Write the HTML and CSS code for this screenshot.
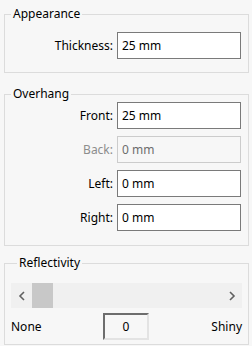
FILE: index.html
```html
<!DOCTYPE html>
<html lang="en">
<head>
    <meta charset="UTF-8">
    <title>Settings</title>
    <link rel="stylesheet" href="styles.css">
</head>
<body>
    <fieldset class="group group-appearance">
        <legend>Appearance</legend>
        <div class="field-row">
            <label for="thickness">Thickness:</label>
            <input id="thickness" type="text" value="25 mm">
        </div>
    </fieldset>

    <fieldset class="group group-overhang">
        <legend>Overhang</legend>
        <div class="field-row">
            <label for="front">Front:</label>
            <input id="front" type="text" value="25 mm">
        </div>
        <div class="field-row disabled">
            <label for="back">Back:</label>
            <input id="back" type="text" value="0 mm" disabled>
        </div>
        <div class="field-row">
            <label for="left">Left:</label>
            <input id="left" type="text" value="0 mm">
        </div>
        <div class="field-row">
            <label for="right">Right:</label>
            <input id="right" type="text" value="0 mm">
        </div>
    </fieldset>

    <fieldset class="group group-reflect">
        <legend>Reflectivity</legend>
        <div class="hscroll">
            <span class="arrow">
                <svg width="8" height="10" viewBox="0 0 8 10"><path d="M6 1 L2 5 L6 9" fill="none" stroke="#606060" stroke-width="1.6"/></svg>
            </span>
            <span class="track"><span class="thumb"></span></span>
            <span class="arrow">
                <svg width="8" height="10" viewBox="0 0 8 10"><path d="M2 1 L6 5 L2 9" fill="none" stroke="#606060" stroke-width="1.6"/></svg>
            </span>
        </div>
        <div class="range-row">
            <span class="range-min">None</span>
            <span class="value-box">0</span>
            <span class="range-max">Shiny</span>
        </div>
    </fieldset>
</body>
</html>
```

FILE: styles.css
```css
body {
    margin: 0;
    padding: 6px 0 0 0;
    background-color: #f7f7f7;
    color: #000;
    font-family: 'Noto Sans', 'Open Sans', sans-serif;
    font-size: 12px;
}

.group {
    margin: 0 3px 0 4px;
    padding: 0;
    border: 1px solid #dcdcdc;
    min-width: 0;
}

.group legend {
    margin-left: 6px;
    padding: 0 2px 0 2px;
    line-height: 16px;
}

.group-appearance {
    padding: 10px 7px 13px 0;
}

.group-overhang {
    margin-top: 13px;
    padding: 0 7px 14px 0;
    display: flex;
    flex-direction: column;
    gap: 7px;
}

.group-reflect {
    margin-top: 9px;
    padding: 12px 6px 4px 6px;
}

.field-row {
    display: grid;
    grid-template-columns: 1fr 124px;
    column-gap: 4px;
    align-items: center;
}

.field-row label {
    text-align: right;
}

.field-row input {
    box-sizing: border-box;
    width: 124px;
    height: 27px;
    margin: 0;
    padding: 0 4px;
    border: 1px solid #7a7a7a;
    background-color: #fff;
    color: #000;
    font-family: inherit;
    font-size: 12px;
    outline: none;
}

.field-row.disabled label {
    color: #8d8d8d;
}

.field-row.disabled input {
    border-color: #cccccc;
    background-color: #f7f7f7;
    color: #6d6d6d;
}

.hscroll {
    display: flex;
    height: 25px;
    background-color: #f0f0f0;
}

.hscroll .arrow {
    width: 21px;
    display: flex;
    align-items: center;
    justify-content: center;
}

.hscroll .track {
    flex: 1;
    display: flex;
}

.hscroll .thumb {
    width: 21px;
    background-color: #c8c8c8;
}

.range-row {
    margin-top: 5px;
    display: grid;
    grid-template-columns: 1fr 45px 1fr;
    align-items: center;
}

.range-max {
    text-align: right;
}

.value-box {
    box-sizing: border-box;
    height: 27px;
    display: flex;
    align-items: center;
    justify-content: center;
    border-style: solid;
    border-width: 2px;
    border-color: #6d6d6d #e3e3e3 #e3e3e3 #6d6d6d;
    background-color: #f7f7f7;
    margin-left: -1px;
}
```
